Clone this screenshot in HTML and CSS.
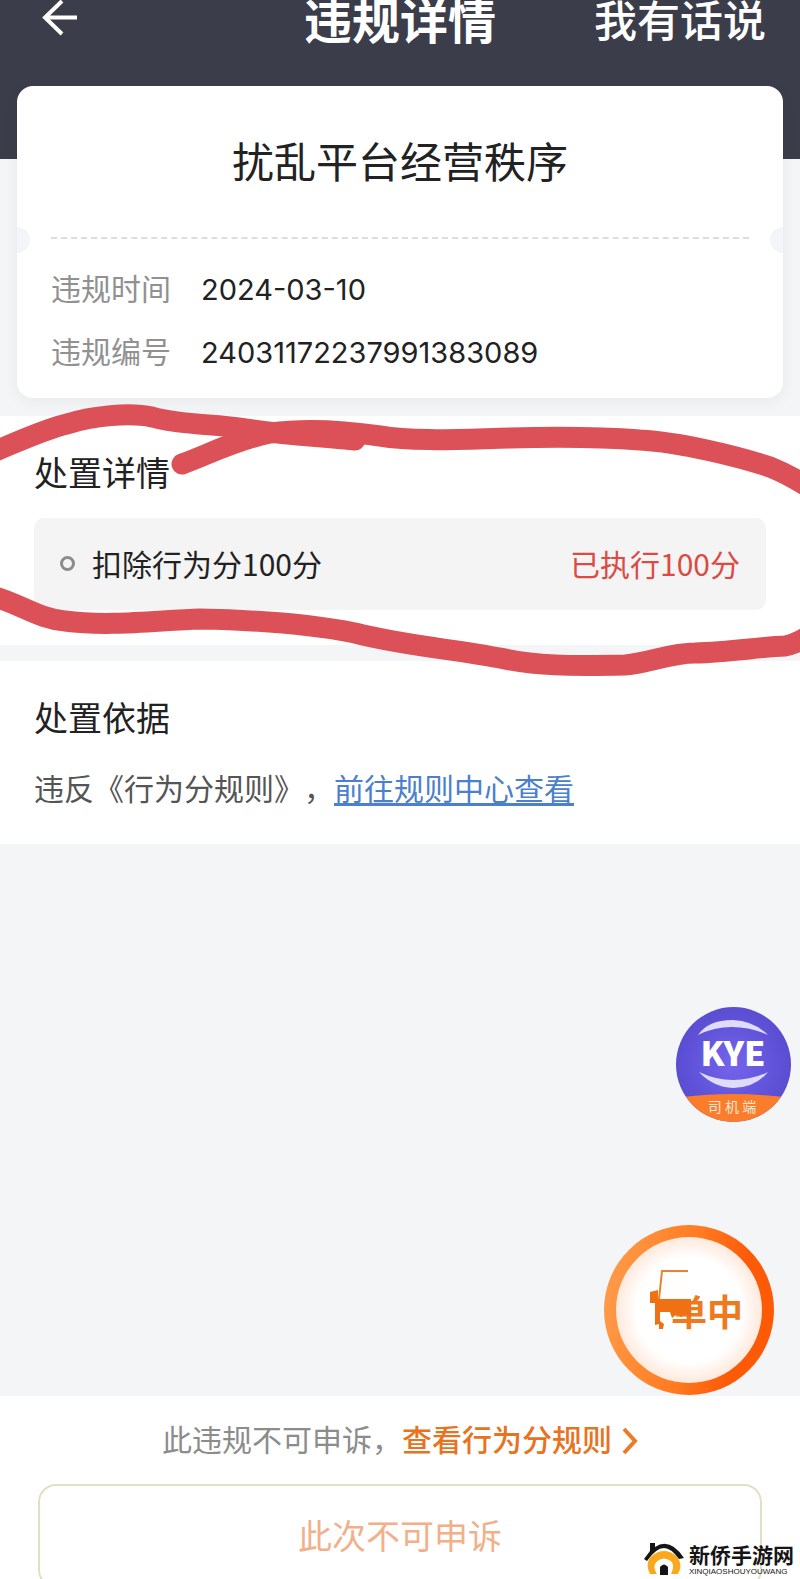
FILE: index.html
```html
<!DOCTYPE html>
<html lang="zh-CN">
<head>
    <meta charset="UTF-8">
    <meta name="viewport" content="width=device-width, initial-scale=1.0">
    <title>违规详情</title>
    <link rel="stylesheet" href="styles.css">
</head>
<body>
    <header class="topbar">
        <button class="back" type="button" aria-label="返回">
            <svg width="36" height="36" viewBox="0 0 36 36" fill="none" stroke="#fff" stroke-width="4">
                <path d="M20 1L3 17.500L20 34M4 17.500H35"/>
            </svg>
        </button>
        <h1>违规详情</h1>
        <a class="talk" href="#">我有话说</a>
    </header>

    <main>
        <section class="card">
            <h2>扰乱平台经营秩序</h2>
            <div class="divider"></div>
            <dl>
                <div class="row"><dt>违规时间</dt><dd>2024-03-10</dd></div>
                <div class="row"><dt>违规编号</dt><dd>24031172237991383089</dd></div>
            </dl>
        </section>

        <section class="panel result">
            <h3>处置详情</h3>
            <div class="item">
                <span class="ring"></span>
                <span>扣除行为分100分</span>
                <span class="done">已执行100分</span>
            </div>
            <!-- red marker line around the result -->
            <svg class="marker" viewBox="0 400 800 290" preserveAspectRatio="none" fill="none" stroke="#dc5158" stroke-width="21" stroke-linecap="round" stroke-linejoin="round">
                <path d="M-12 453C20 440 45 428 67 423C92 415 130 411 152 416C180 424 215 423 240 427C280 434 320 435 355 439"/>
                <path d="M182 463C205 455 235 439 270 432C300 428 340 429 380 435C415 441 465 438 510 437C550 436 600 436 640 439C680 441 740 456 770 466C785 472 798 479 814 490"/>
                <path d="M-12 594C20 602 38 618 65 620C110 626 160 619 200 618C250 619 310 623 355 632C405 645 455 648 500 657C535 665 570 665 625 664C650 662 670 652 695 652C730 651 760 646 785 645C795 643 802 640 812 632"/>
            </svg>
        </section>

        <section class="panel basis">
            <h3>处置依据</h3>
            <p>违反《行为分规则》，<a href="#">前往规则中心查看</a></p>
        </section>
    </main>

    <footer class="bottom">
        <p>此违规不可申诉，<a href="#">查看行为分规则<svg width="16" height="28" viewBox="0 0 16 28" fill="none" stroke="#ee7a26" stroke-width="4"><path d="M2 2L13 14L2 26"/></svg></a></p>
        <button class="appeal" type="button" disabled>此次不可申诉</button>
    </footer>

    <button class="kye" type="button">
        <svg viewBox="0 0 115 115">
            <defs>
                <radialGradient id="purple"><stop offset="0" stop-color="#7464ec"/><stop offset="1" stop-color="#5a4dd2"/></radialGradient>
                <clipPath id="round"><circle cx="57.500" cy="57.500" r="57.500"/></clipPath>
            </defs>
            <g clip-path="url(#round)">
                <rect width="115" height="115" fill="url(#purple)"/>
                <path d="M0 91Q57 83 115 91V115H0Z" fill="#fb7d2c"/>
            </g>
            <path d="M22 28Q32 13 57 13Q78 14 92 28Q74 20 56 20Q38 20 22 28Z" fill="#dedcfa"/>
            <path d="M23 65Q40 73 57 73Q76 73 92 65Q79 81 57 81Q37 80 23 65Z" fill="#dedcfa"/>
            <text class="kye-name" x="57" y="59" text-anchor="middle">KYE</text>
            <text class="kye-sub" x="56" y="105" text-anchor="middle">司 机 端</text>
        </svg>
    </button>

    <button class="order" type="button">
        <span>单中</span>
        <svg width="44" height="62" viewBox="0 0 44 62">
            <path d="M11 3H38V32H11Z" fill="#fffefd"/>
            <path d="M38 2H12L9 30" fill="none" stroke="#e8842f" stroke-width="2"/>
            <path d="M0 23L8 21V30H41V48L36 45L31 48L27 45L22 49L20 43H10V52L14 55L13 60H9V55L5 56V34H0Z" fill="#f07014"/>
        </svg>
    </button>

    <div class="site">
        <svg width="44" height="36" viewBox="0 0 44 36">
            <path d="M8 33Q2 21 11 14Q22 6 33 14Q42 22 36 33H29Q34 22 27 19Q22 16 17 19Q9 24 15 33Z" fill="#fba81c"/>
            <path d="M2 18L8 10V2H13V6Q28-4 42 17L37 18Q29 7 22 7Q14 7 5 20Z" fill="#151515"/>
            <path d="M18 34V26Q22 21 26 26V34Z" fill="#151515"/>
        </svg>
        <div>
            <strong>新侨手游网</strong>
            <small>XINQIAOSHOUYOUWANG</small>
        </div>
    </div>
</body>
</html>
```
FILE: styles.css
```css
*{
    margin: 0;
    padding: 0;
    box-sizing: border-box;
}
body{
    position: relative;
    display: flex;
    flex-direction: column;
    height: 100vh;
    min-height: 1200px;
    overflow: hidden;
    background: #f4f5f6;
    color: #222;
    font-family: "Noto Sans CJK SC", sans-serif;
    font-size: 30px;
    line-height: 44px;
    text-spacing-trim: space-all;
}
button{
    border: 0;
    background: none;
    font-family: inherit;
}
h1, h2, h3{
    font-weight: 400;
}

.topbar{
    display: grid;
    grid-template-columns: 1fr auto 1fr;
    align-items: center;
    height: 159px;
    padding: 0 34px 127px;
    background: #3b3e4a;
    color: #fff;
    line-height: 32px;
}
.back{
    width: 36px;
    height: 36px;
    margin-left: 8px;
}
.back svg{
    display: block;
}
.topbar h1{
    font-size: 48px;
    font-weight: 700;
}
.talk{
    justify-self: end;
    color: #fff;
    font-size: 43px;
    font-weight: 500;
    text-decoration: none;
}

main{
    flex: 1;
}
.card{
    position: relative;
    margin: -73px 17px 18px;
    padding: 42px 34px 16px;
    border-radius: 16px;
    background: #fff;
    box-shadow: 0 4px 16px rgba(0, 0, 0, 0.05);
}
.card h2{
    font-size: 42px;
    line-height: 64px;
    text-align: center;
}
.divider{
    margin: 45px 0 17px;
    border-top: 2px dashed #ddd;
}
.divider::before,
.divider::after{
    content: "";
    position: absolute;
    top: 141px;
    width: 13px;
    height: 26px;
    background: #f4f5f6;
}
.divider::before{
    left: 0;
    border-radius: 0 13px 13px 0;
}
.divider::after{
    right: 0;
    border-radius: 13px 0 0 13px;
}
.row{
    display: flex;
    align-items: baseline;
    gap: 30px;
    height: 63px;
    padding-top: 9px;
}
.row dt{
    color: #919191;
}
.row dd{
    font-family: Inter, "Noto Sans CJK SC", sans-serif;
    font-size: 29px;
}

.panel{
    padding: 34px 34px 35px;
    background: #fff;
}
.panel h3{
    font-size: 34px;
    line-height: 44px;
}
.result{
    position: relative;
    margin-bottom: 16px;
}
.item{
    display: flex;
    align-items: center;
    margin-top: 24px;
    padding: 23px 26px 25px;
    border-radius: 10px;
    background: #f4f4f4;
}
.ring{
    width: 15px;
    height: 15px;
    margin-right: 17px;
    border: 3px solid #8c8c8c;
    border-radius: 50%;
}
.done{
    margin-left: auto;
    color: #dc4a44;
}
.marker{
    position: absolute;
    top: -15px;
    left: 0;
    width: 100%;
    height: 290px;
}
.basis p{
    margin-top: 26px;
    color: #555;
}
.basis a{
    color: #4a80cc;
    text-decoration-thickness: 3px;
    text-underline-offset: 3px;
}

.bottom{
    height: 183px;
    padding: 20px 38px 0;
    background: #fff;
    text-align: center;
}
.bottom p{
    color: #8c8c8c;
}
.bottom a{
    color: #e8731e;
    font-weight: 500;
    text-decoration: none;
}
.bottom p svg{
    margin-left: 10px;
    vertical-align: -4px;
}
.appeal{
    width: 100%;
    height: 104px;
    margin-top: 24px;
    padding-bottom: 4px;
    border: 2px solid #e0e0c6;
    border-radius: 18px;
    color: #f2b08a;
    font-size: 34px;
}

.kye{
    position: absolute;
    right: 9px;
    bottom: 457px;
    width: 115px;
    height: 115px;
    border-radius: 50%;
}
.kye svg{
    display: block;
}
.kye-name{
    fill: #fff;
    font-size: 34px;
    font-weight: 900;
}
.kye-sub{
    fill: #fde6d6;
    font-size: 14px;
}
.order{
    position: absolute;
    right: 26px;
    bottom: 184px;
    width: 170px;
    height: 170px;
    border: 12px solid transparent;
    border-radius: 50%;
    background: radial-gradient(closest-side, #fff 72%, #ffe9dc) padding-box, linear-gradient(100deg, #ff9f4f, #ff7a20 50%, #fd5a08 75%) border-box;
}
.order span{
    position: absolute;
    top: 46px;
    left: 55px;
    color: #ee7a1e;
    font-size: 36px;
    font-weight: 700;
    line-height: 54px;
}
.order svg{
    position: absolute;
    top: 32px;
    left: 34px;
}

.site{
    position: absolute;
    right: 6px;
    bottom: 2px;
    display: flex;
    align-items: center;
    gap: 3px;
    color: #151515;
}
.site strong,
.site small{
    display: block;
}
.site strong{
    font-size: 21px;
    line-height: 26px;
}
.site small{
    font-family: "Liberation Sans", Arial, sans-serif;
    font-size: 8px;
    line-height: 10px;
}
```
